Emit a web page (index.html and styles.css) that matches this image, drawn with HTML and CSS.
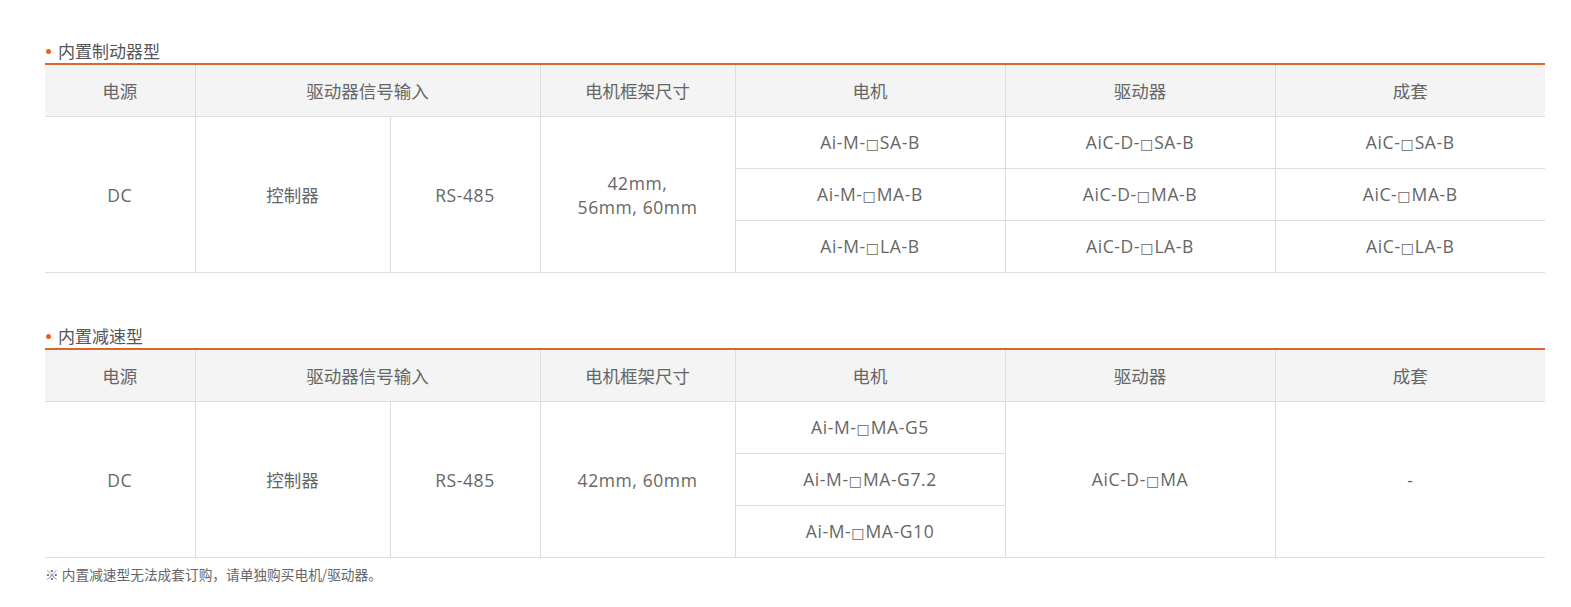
FILE: index.html
```html
<!DOCTYPE html>
<html lang="zh-CN">
<head>
<meta charset="utf-8">
<link rel="stylesheet" href="styles.css">
</head>
<body>
<div class="wrap">
  <section class="block first">
    <h3 class="title"><span class="dot"></span>内置制动器型</h3>
    <table class="spec">
      <colgroup>
        <col class="c10"><col class="c13"><col class="c10"><col class="c13"><col class="c18"><col class="c18"><col class="c18">
      </colgroup>
      <thead>
        <tr><th>电源</th><th colspan="2">驱动器信号输入</th><th>电机框架尺寸</th><th>电机</th><th>驱动器</th><th>成套</th></tr>
      </thead>
      <tbody>
        <tr>
          <td rowspan="3" class="first-col">DC</td>
          <td rowspan="3" class="cjk">控制器</td>
          <td rowspan="3">RS-485</td>
          <td rowspan="3">42mm,<br>56mm, 60mm</td>
          <td>Ai-M-<span class="sq">□</span>SA-B</td>
          <td>AiC-D-<span class="sq">□</span>SA-B</td>
          <td class="last-col">AiC-<span class="sq">□</span>SA-B</td>
        </tr>
        <tr>
          <td>Ai-M-<span class="sq">□</span>MA-B</td>
          <td>AiC-D-<span class="sq">□</span>MA-B</td>
          <td class="last-col">AiC-<span class="sq">□</span>MA-B</td>
        </tr>
        <tr>
          <td>Ai-M-<span class="sq">□</span>LA-B</td>
          <td>AiC-D-<span class="sq">□</span>LA-B</td>
          <td class="last-col">AiC-<span class="sq">□</span>LA-B</td>
        </tr>
      </tbody>
    </table>
  </section>
  <section class="block second">
    <h3 class="title"><span class="dot"></span>内置减速型</h3>
    <table class="spec">
      <colgroup>
        <col class="c10"><col class="c13"><col class="c10"><col class="c13"><col class="c18"><col class="c18"><col class="c18">
      </colgroup>
      <thead>
        <tr><th>电源</th><th colspan="2">驱动器信号输入</th><th>电机框架尺寸</th><th>电机</th><th>驱动器</th><th>成套</th></tr>
      </thead>
      <tbody>
        <tr>
          <td rowspan="3" class="first-col">DC</td>
          <td rowspan="3" class="cjk">控制器</td>
          <td rowspan="3">RS-485</td>
          <td rowspan="3">42mm, 60mm</td>
          <td>Ai-M-<span class="sq">□</span>MA-G5</td>
          <td rowspan="3">AiC-D-<span class="sq">□</span>MA</td>
          <td rowspan="3" class="last-col">-</td>
        </tr>
        <tr>
          <td>Ai-M-<span class="sq">□</span>MA-G7.2</td>
        </tr>
        <tr>
          <td>Ai-M-<span class="sq">□</span>MA-G10</td>
        </tr>
      </tbody>
    </table>
    <p class="note">※ 内置减速型无法成套订购，请单独购买电机/驱动器。</p>
  </section>
</div>
</body>
</html>
```

FILE: styles.css
```css
html, body {
  margin: 0;
  padding: 0;
  background: #fff;
}
body {
  font-family: "Open Sans", "Noto Sans CJK SC", sans-serif;
  color: #666;
}
.wrap {
  width: 1500px;
  padding-left: 45px;
}
.block.first {
  padding-top: 39px;
}
.block.second {
  padding-top: 51px;
}
.title {
  margin: 0;
  height: 24px;
  line-height: 22px;
  font-size: 17px;
  font-weight: normal;
  color: #555;
  font-family: "Noto Sans CJK SC", sans-serif;
  display: flex;
  align-items: center;
  gap: 7px;
  border-bottom: 2px solid #d9692b;
  padding-left: 1px;
}
.dot {
  width: 5px;
  height: 5px;
  border-radius: 50%;
  background: #e5641d;
  flex: none;
}
.spec {
  width: 1500px;
  border-collapse: collapse;
  table-layout: fixed;
  font-size: 17.5px;
}
.c10 { width: 10%; }
.c13 { width: 13%; }
.c18 { width: 18%; }
.spec th,
.spec td {
  border: 1px solid #ddd;
  text-align: center;
  vertical-align: middle;
  padding: 0;
  font-weight: normal;
  line-height: 24px;
}
.spec td {
  height: 51px;
  letter-spacing: 0.6px;
}
.spec th {
  background: #f4f4f4;
  height: 51px;
  border-top: none;
  font-family: "Noto Sans CJK SC", sans-serif;
  letter-spacing: 0;
}
.spec td.cjk {
  font-family: "Noto Sans CJK SC", sans-serif;
  letter-spacing: 0;
}
.spec th:first-child,
.spec .first-col {
  border-left: none;
}
.spec th:last-child,
.spec .last-col {
  border-right: none;
}
.sq {
  font-family: "DejaVu Sans", sans-serif;
  font-size: 14px;
  display: inline-block;
  vertical-align: baseline;
  margin: 0 1px 0 0;
  letter-spacing: 0;
}
.note {
  margin: 5px 0 0;
  font-size: 13.7px;
  line-height: 22px;
  font-family: "Noto Sans CJK SC", sans-serif;
  color: #666;
}
```
